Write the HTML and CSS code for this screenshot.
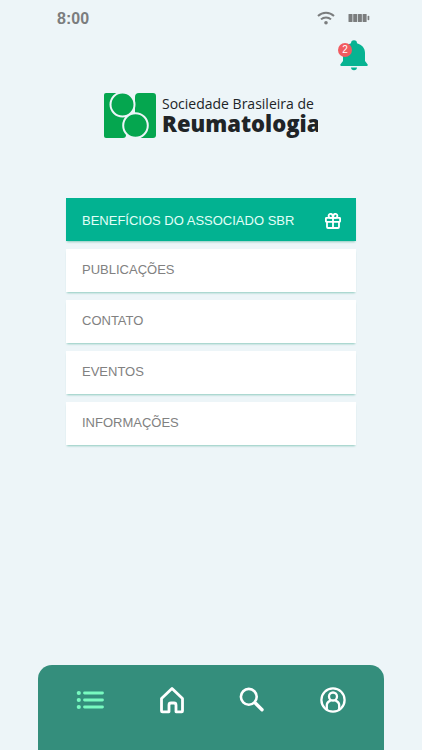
FILE: index.html
```html
<!DOCTYPE html>
<html lang="pt-BR">
<head>
  <meta charset="UTF-8" />
  <meta name="viewport" content="width=device-width, initial-scale=1" />
  <title>Sociedade Brasileira de Reumatologia</title>
  <link rel="stylesheet" href="styles.css">
</head>
<body>

  <div class="status-bar">
    <span class="time">8:00</span>
    <div class="status-icons">
      <svg width="18" height="14" viewBox="0 0 18 14" fill="none" stroke="#7b7d7e" stroke-width="2">
        <path d="M1 5a11.5 11.5 0 0 1 16 0" />
        <path d="M4 8.4a7.2 7.2 0 0 1 10 0" />
        <circle cx="9" cy="11.7" r="1.8" fill="#7b7d7e" stroke="none" />
      </svg>
      <svg width="22" height="10" viewBox="0 0 22 10" fill="#7b7d7e">
        <rect x="0.5" y="1" width="4" height="8" rx="0.5" />
        <rect x="5.2" y="1" width="4" height="8" rx="0.5" />
        <rect x="9.9" y="1" width="4" height="8" rx="0.5" />
        <rect x="14.6" y="1" width="4" height="8" rx="0.5" />
        <rect x="19.6" y="2.8" width="1.7" height="4.4" rx="0.8" />
      </svg>
    </div>
  </div>

  <div class="top">
    <button class="bell" aria-label="Notificações">
      <svg width="28" height="31" viewBox="0 0 28 31" fill="#07b392">
        <path d="M11 3.200a3 3 0 0 1 6 0c5 1.400 8 5 8 9.600V21l2.500 3.200c.6.800.3 1.800-.7 1.800H1.200c-1 0-1.300-1-.7-1.800L3 21v-8.200c0-4.600 3-8.200 8-9.600z" />
        <path d="M11 27.500h6c0 1.600-1.200 2.800-3 2.800s-3-1.200-3-2.800z" />
      </svg>
      <span class="badge">2</span>
    </button>
  </div>

  <div class="logo">
    <svg width="52" height="47" viewBox="0 0 52 47">
      <path fill="#05a64f" d="M2 1h20v42q0 3-3 3H2q-2 0-2-2V3q0-2 2-2z" />
      <path fill="#05a64f" d="M35 1h14q3 0 3 3v39q0 3-3 3H31V5q0-4 4-4z" />
      <circle cx="18.500" cy="12.500" r="12" fill="#05a64f" stroke="#edf5f8" stroke-width="2" />
      <circle cx="31.500" cy="33.500" r="12.300" fill="#05a64f" stroke="#edf5f8" stroke-width="2" />
    </svg>
    <div class="logo-text">
      <span class="logo-small">Sociedade Brasileira de</span>
      <span class="logo-big">Reumatologia</span>
    </div>
  </div>

  <div class="menu">
    <button class="menu-item active">
      BENEFÍCIOS DO ASSOCIADO SBR
      <svg width="16" height="16" viewBox="0 0 16 16" fill="none" stroke="#fff" stroke-width="1.800" stroke-linejoin="round">
        <rect x="0.9" y="4.800" width="14.200" height="4" rx="0.500" />
        <path d="M2 8.800V14q0 1 1 1h10q1 0 1-1V8.800M8 4.800V15" />
        <path d="M8 4.800H5.200a2 2 0 1 1 2-3.200L8 4.800zM8 4.800h2.800a2 2 0 1 0-2-3.200L8 4.800z" />
      </svg>
    </button>
    <button class="menu-item">PUBLICAÇÕES</button>
    <button class="menu-item">CONTATO</button>
    <button class="menu-item">EVENTOS</button>
    <button class="menu-item">INFORMAÇÕES</button>
  </div>

  <nav class="navbar">
    <button aria-label="Menu">
      <svg width="28" height="28" viewBox="0 0 28 28" fill="none" stroke="#78fac0" stroke-linecap="round">
        <path stroke-width="2.800" d="M8.500 7H26.500M8.500 14H26.500M8.500 21H26.500" />
        <path stroke-width="4.200" d="M2.800 7h.01M2.800 14h.01M2.800 21h.01" />
      </svg>
    </button>
    <button aria-label="Início">
      <svg width="28" height="28" viewBox="0 0 28 28" fill="none" stroke="#fff" stroke-width="2.800" stroke-linejoin="round">
        <path d="M15 2.500L25.500 12.500V25q0 .8-.8.800H19V19q0-2-2-2h-3q-2 0-2 2v6.800H5.500q-1 0-1-.8V12.500z" />
      </svg>
    </button>
    <button aria-label="Buscar">
      <svg width="28" height="28" viewBox="0 0 28 28" fill="none" stroke="#fff">
        <circle cx="10.800" cy="10.800" r="7.900" stroke-width="2.600" />
        <path stroke-width="3.400" stroke-linecap="round" d="M17.500 17.300l6.500 6.500" />
      </svg>
    </button>
    <button aria-label="Perfil">
      <svg width="28" height="28" viewBox="0 0 28 28" fill="none" stroke="#fff" stroke-width="2.300">
        <circle cx="14" cy="14" r="11.600" />
        <circle cx="14" cy="10.500" r="4" />
        <path d="M7.800 23.600V20.500a5.500 5.500 0 0 1 3.800-5.800M20.200 23.600V20.500a5.500 5.500 0 0 0-3.800-5.800" />
      </svg>
    </button>
  </nav>

</body>
</html>
```

FILE: styles.css
```css
* {
  box-sizing: border-box;
  margin: 0;
  padding: 0;
}
body {
  display: flex;
  flex-direction: column;
  min-height: 100vh;
  background: #edf5f8;
  font-family: 'Liberation Sans', Arial, sans-serif;
}
button {
  border: none;
  background: none;
  font-family: inherit;
  cursor: pointer;
}
svg {
  display: block;
}
.status-bar {
  display: flex;
  justify-content: space-between;
  align-items: center;
  height: 36px;
  padding: 0 52px 0 57px;
}
.time {
  padding-top: 2px;
  font-size: 16px;
  font-weight: bold;
  line-height: 36px;
  color: #7b7d7e;
}
.status-icons {
  display: flex;
  align-items: center;
  gap: 13px;
}
.top {
  display: flex;
  justify-content: flex-end;
  padding: 4px 54px 0;
}
.bell {
  position: relative;
}
.badge {
  position: absolute;
  top: 3px;
  left: -2px;
  width: 14px;
  height: 14px;
  border-radius: 50%;
  background: #f15b60;
  color: #fff;
  font-size: 10px;
  line-height: 14px;
  text-align: center;
}
.logo {
  display: flex;
  align-self: center;
  gap: 6px;
  width: 214px;
  margin-top: 21px;
  overflow: hidden;
}
.logo svg {
  flex-shrink: 0;
}
.logo-text {
  display: flex;
  flex-direction: column;
  padding-top: 3px;
  font-family: 'Open Sans', 'Noto Sans', sans-serif;
  color: #202427;
  white-space: nowrap;
}
.logo-small {
  font-size: 14px;
  line-height: 18px;
}
.logo-big {
  font-size: 22px;
  font-weight: 800;
  line-height: 20px;
}
.menu {
  display: flex;
  flex-direction: column;
  gap: 8px;
  margin: 59px 66px 24px;
}
.menu-item {
  display: flex;
  justify-content: space-between;
  align-items: center;
  height: 43px;
  padding: 0 15px 2px 16px;
  background: #fff;
  box-shadow: 0 2px 2px -1px #8fcabf;
  color: #818181;
  font-size: 13px;
  text-align: left;
}
.menu-item.active {
  padding-top: 2px;
  padding-bottom: 0;
  background: #02b291;
  color: #e2fff8;
}
.navbar {
  display: flex;
  justify-content: space-between;
  height: 85px;
  margin: auto 38px 0;
  padding: 21px 37px 0 38px;
  border-radius: 14px 14px 0 0;
  background: #348e7c;
}
.navbar button {
  height: 28px;
}
```
